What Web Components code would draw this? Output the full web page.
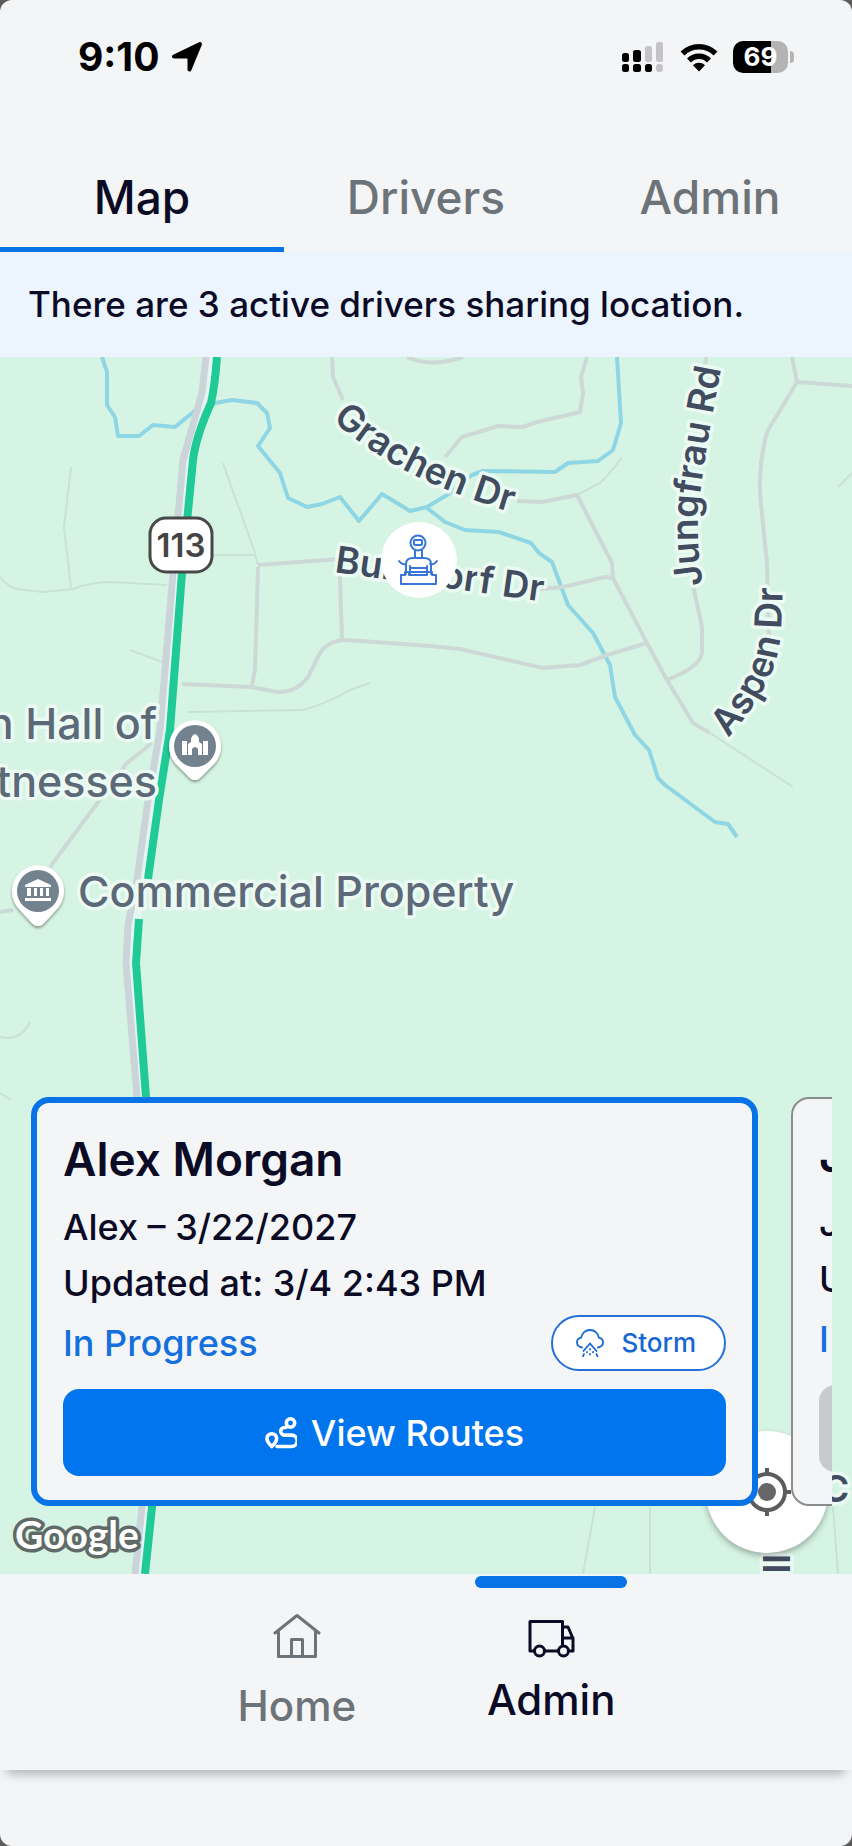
<!DOCTYPE html>
<html lang="en">
<head>
<meta charset="utf-8">
<meta name="viewport" content="width=device-width, initial-scale=1">
<title>Driver Map</title>
<style>
  html, body { margin: 0; }
  body {
    background: #5c5c5c;
    font-family: Inter, "Liberation Sans", sans-serif;
    font-weight: 500;
    --ink: #0b0b26;
    --muted: #6c7379;
    --blue: #0773e6;
    --surface: #f4f5f7;
    color: var(--ink);
  }
</style>
</head>
<body>
<driver-app></driver-app>

<template id="tpl-app">
  <style>
    :host {
      display: flex; flex-direction: column; min-height: 100vh;
      background: var(--surface); border-radius: 12px; overflow: hidden;
    }
    map-view { flex: 1 1 auto; }
    footer { height: 76px; }
  </style>
  <status-bar></status-bar>
  <tab-strip></tab-strip>
  <info-banner>There are 3 active drivers sharing location.</info-banner>
  <map-view>
    <driver-card selected button-label="View Routes">
      <span slot="name">Alex Morgan</span>
      <span slot="shift">Alex – 3/22/2027</span>
      <span slot="updated">Updated at: 3/4 2:43 PM</span>
      <span slot="status">In Progress</span>
      <storm-pill slot="tag">Storm</storm-pill>
    </driver-card>
    <driver-card button-label="">
      <span slot="name">J</span>
      <span slot="shift">J</span>
      <span slot="updated">U</span>
      <span slot="status">I</span>
    </driver-card>
  </map-view>
  <bottom-nav></bottom-nav>
  <footer></footer>
</template>

<template id="tpl-status">
  <style>
    :host { display: flex; align-items: center; justify-content: space-between; height: 114px; padding: 0 58px 0 78px; color: #000; }
    .left, .right { display: flex; align-items: center; }
    .left { gap: 12px; font-size: 39px; line-height: 48px; font-weight: 700; }
    .right { gap: 15px; }
    svg { display: block; }
    .battery { display: flex; align-items: center; gap: 2px; }
    .cell {
      width: 55px; height: 32px; border-radius: 10px; text-align: center;
      background: linear-gradient(90deg, #000 0 38px, #b4b4b4 38px);
      color: #fff; font-size: 26px; line-height: 32px; font-weight: 700;
    }
    .tip { width: 4px; height: 12px; border-radius: 0 4px 4px 0; background: #b4b4b4; }
  </style>
  <div class="left">
    <span>9:10</span>
    <svg width="32" height="32" viewBox="0 0 32 32" aria-hidden="true"><path d="M29 3 18.500 28.500V15.500H3Z" stroke="#000" stroke-width="4" stroke-linejoin="round"/></svg>
  </div>
  <div class="right">
    <svg width="44" height="32" viewBox="0 0 44 32" aria-hidden="true">
      <g fill="#000"><rect x="1" y="12" width="7" height="9" rx="2.500"/><rect x="12" y="9" width="8" height="12" rx="2.500"/>
      <rect x="1" y="23" width="7" height="8" rx="2.500"/><rect x="12" y="23" width="8" height="8" rx="2.500"/><rect x="24" y="23" width="7" height="8" rx="2.500"/></g>
      <g fill="#c4c4c6"><rect x="24" y="5" width="7" height="16" rx="2.500"/><rect x="35" y="1" width="7" height="20" rx="2.500"/><rect x="35" y="23" width="7" height="8" rx="3"/></g>
    </svg>
    <svg width="38" height="32" viewBox="0 0 38 32" aria-hidden="true">
      <g fill="none" stroke="#000" stroke-width="5.500"><path d="M2.500 12.500a23.500 23.500 0 0 1 33 0"/><path d="M9 19.500a14 14 0 0 1 20 0"/></g>
      <path d="M19 30.500l-6-6.200a8.500 8.500 0 0 1 12 0Z"/>
    </svg>
    <div class="battery"><div class="cell">69</div><div class="tip"></div></div>
  </div>
</template>

<template id="tpl-tabs">
  <style>
    :host { display: grid; grid-template-columns: repeat(3, 1fr); }
    button {
      font: inherit; font-size: 46px; line-height: 56px; color: var(--muted);
      background: none; border: 0; border-bottom: 5px solid transparent; margin: 0;
      padding: 55px 0 22px;
    }
    button[aria-selected="true"] { color: var(--ink); border-bottom-color: var(--blue); }
  </style>
  <button role="tab" aria-selected="true">Map</button>
  <button role="tab" aria-selected="false">Drivers</button>
  <button role="tab" aria-selected="false">Admin</button>
</template>

<template id="tpl-banner">
  <style>
    :host { display: block; background: #ecf4fe; padding: 30px 28px 31px; font-size: 35px; line-height: 44px; }
  </style>
  <slot></slot>
</template>

<template id="tpl-pill">
  <style>
    :host {
      display: flex; align-items: center; gap: 17px; box-sizing: border-box; height: 56px;
      padding: 0 28px 0 23px; border: 2px solid #2470d8; border-radius: 28px;
      background: #fff; color: #1767d2; font-size: 26px; line-height: 32px;
    }
  </style>
  <svg width="28" height="28" viewBox="0 0 28 28" fill="none" stroke="#1767d2" stroke-width="1.800" stroke-linecap="round" stroke-linejoin="round" aria-hidden="true">
    <path d="M6 18.500C3 18 1 16 1 13.300 1 10.800 2.800 9 5.200 8.600 5.800 4.200 9.500 1 14 1s8.200 3.200 8.800 7.600c2.400.4 4.200 2.200 4.200 4.700 0 2.700-2 4.700-5 5.200"/>
    <path d="M7.500 22l6.500-7.500 6.500 7.500M8 25l-1 2.500M20.500 25l1 2.500M14 20v.5M14 25v.5M11 23v.3M17 23v.3"/>
  </svg>
  <slot></slot>
</template>

<template id="tpl-card">
  <style>
    :host {
      display: flex; flex-direction: column; box-sizing: border-box;
      flex: 0 0 calc(100% - 74px); padding: 24px 26px;
      background: var(--surface); border: 2px solid #8a8c8e; border-radius: 18px;
      font-size: 36px; line-height: 56px; white-space: nowrap;
    }
    :host([selected]) { border: 6px solid var(--blue); }
    h2 { margin: 0 0 8px; font-size: 46px; line-height: 64px; font-weight: 600; }
    p { margin: 0; }
    .row { display: flex; align-items: center; justify-content: space-between; height: 56px; margin: 4px 0 18px; color: #1470dc; }
    button {
      display: flex; align-items: center; justify-content: center; gap: 14px;
      height: 87px; border: 0; border-radius: 16px; background: #c9cacc; color: #fff;
      font: inherit; line-height: 44px;
    }
    :host([selected]) button { background: #0075ee; }
  </style>
  <h2><slot name="name"></slot></h2>
  <p><slot name="shift"></slot></p>
  <p><slot name="updated"></slot></p>
  <div class="row"><slot name="status"></slot><slot name="tag"></slot></div>
  <button type="button"></button>
</template>

<template id="tpl-map">
  <style>
    :host { display: block; position: relative; overflow: hidden; min-height: 1217px; background: #d6f4e3; }
    .map { position: absolute; inset: 0; width: 100%; height: 100%; display: block; }
    .locate {
      position: absolute; right: 24px; bottom: 21px; width: 122px; height: 122px; padding: 0;
      display: grid; place-items: center;
      border: 0; border-radius: 50%; background: #fff; box-shadow: 0 3px 6px rgba(0, 0, 0, .3);
    }
    .cards {
      position: absolute; left: 20px; right: 20px; bottom: 68px; padding-left: 11px;
      display: flex; gap: 33px; overflow: hidden;
    }
    .minor { fill: none; stroke: #cdd9d6; stroke-width: 4; stroke-linejoin: round; }
    .faint { fill: none; stroke: #c8e2d7; stroke-width: 2; stroke-linejoin: round; }
    .river { fill: none; stroke: #8fd6e4; stroke-width: 4; stroke-linejoin: round; }
    .road { fill: none; stroke: #cbd4d8; stroke-width: 7; stroke-linejoin: round; }
    .casing { fill: none; stroke: #e4f6f2; stroke-width: 12; stroke-linejoin: round; }
    .route { fill: none; stroke: #1fca96; stroke-width: 8; stroke-linejoin: round; }
    text { paint-order: stroke; stroke: #ebfaf3; stroke-width: 7; stroke-linejoin: round; }
    .street { font-size: 37px; font-weight: 600; fill: #414c60; }
    .poi { font-size: 43px; fill: #5c6978; }
    .shield { font-size: 33px; font-weight: 600; fill: #444; stroke: none; }
    .brand { font-family: Lato, sans-serif; font-size: 39px; font-weight: 700; fill: #fff; stroke: #606a66; stroke-width: 7; }
  </style>
  <svg class="map" viewBox="0 357 852 1217" preserveAspectRatio="xMidYMid slice" role="img" aria-label="Map of driver locations">
    <defs>
      <path id="p-grachen" d="M332 420Q371 454 416 476T524 516"/>
      <path id="p-burgdorf" d="M334 572L560 604"/>
      <path id="p-jungfrau" d="M703 585Q694 530 701 487Q707 440 723 360"/>
      <path id="p-aspen" d="M728 738Q775 685 780 640Q783 610 783 550"/>
      <filter id="sh" x="-30%" y="-30%" width="160%" height="170%"><feDropShadow dx="0" dy="2" stdDeviation="1.500" flood-opacity=".4"/></filter>
    </defs>
    <g class="faint">
      <path d="M71 467L64 527L71 588M0 577Q8 587 17 589L43 592L73 589Q90 582 110 582L167 585M223 463L255 553M213 555H255L258 565M130 650L162 662"/>
      <path d="M188 712L303 710Q330 702 350 690L370 683M577 495L600 483Q612 472 622 457M710 733L793 787M838 487L852 473"/>
      <path d="M30 1022Q20 1042 0 1037M0 1093L11 1100M595 1507L583 1574M650 1507V1574M833 1507L838 1574"/>
    </g>
    <g class="river">
      <path d="M102 357L107 372V405L115 417L118 436H139L153 425L175 427L197 409L215 403L232 400L257 403L267 413L270 428L258 446L280 473L288 498L307 507L322 504L340 497L359 521L382 494L410 511L427 507L447 495L472 475L483 471L555 472L568 463L598 461L613 450L621 423L617 357"/>
      <path d="M427 508L445 522L465 530L499 532L531 543L539 553L552 562L568 605L593 633L610 665L615 697L635 735L649 750L658 778L665 785L715 822L728 824L737 837"/>
    </g>
    <g class="minor">
      <path d="M332 357L333 377L343 400M517 501L542 502L577 495L612 563L613 578L647 643L667 680L693 723L710 733"/>
      <path d="M587 357L581 377L583 393L580 412L537 422L523 427L498 426L462 437L445 457M407 357Q430 368 463 357"/>
      <path d="M540 589L563 587L605 577L613 578M258 565L340 559V577L342 639M258 567L255 670L252 685"/>
      <path d="M182 684L252 687L277 692Q296 693 308 677L320 653Q328 640 347 640L430 646L460 649L543 668L580 665L607 655L647 643"/>
      <path d="M706 357L704 375M693 585L702 627V653Q700 667 667 680M792 357L797 382L767 432Q757 470 761 505L767 563L769 640M797 382L852 386"/>
      <path d="M152 743L127 763L50 867M0 912L13 910"/>
    </g>
    <path class="casing" d="M214 357L210 393L189 460L180 573L166 730L155 800L144 880L133 925L132 963L142 1097L150 1300L148 1507L141 1574"/>
    <path class="road" d="M206 357L202 393L183 460L173 573L160 730L148 800L137 880L128 925L126 963L137 1097L143 1300L142 1507L135 1574"/>
    <path class="route" d="M217 357Q215 385 211 403Q196 436 193 460L182 573L170 730L159 800L148 879M139 919L136 963L146 1097L154 1300L152 1507L145 1574"/>

    <text class="street"><textPath href="#p-grachen">Grachen Dr</textPath></text>
    <text class="street"><textPath href="#p-burgdorf">Burgdorf Dr</textPath></text>
    <text class="street"><textPath href="#p-jungfrau">Jungfrau Rd</textPath></text>
    <text class="street"><textPath href="#p-aspen">Aspen Dr</textPath></text>
    <text class="street" x="822" y="1502">C</text>
    <text class="street" transform="translate(790 1554) rotate(-90)" text-anchor="end">ll</text>

    <text class="poi" x="157" y="739" text-anchor="end">n Hall of</text>
    <text class="poi" x="157" y="797" text-anchor="end">tnesses</text>
    <text class="poi" x="78" y="907">Commercial Property</text>

    <g transform="translate(195 746)">
      <path filter="url(#sh)" fill="#fff" d="M0 34Q-4 34-8 29L-19 18A26 26 0 1 1 19 18L8 29Q4 34 0 34Z"/>
      <circle r="21" fill="#73828f"/>
      <path fill="#fff" d="M-13-5h5V9h-5ZM8-5h5V9H8ZM-7 9V-2l3-2v-3q1-4 4-5q3 1 4 5v3l3 2V9H3V3Q0-1-3 3v6Z"/>
    </g>
    <g transform="translate(38 891)">
      <path filter="url(#sh)" fill="#fff" d="M0 35Q-4 35-8 30L-19 18A26 26 0 1 1 19 18L8 30Q4 35 0 35Z"/>
      <circle r="21" fill="#73828f"/>
      <path fill="#fff" d="M0-12L13-6v2H-13v-2ZM-11-3h4V5h-4ZM-4-3h3V5h-3ZM2-3h3V5H2ZM8-3h3V5H8ZM-13 7h26v3h-26Z"/>
    </g>

    <rect x="150" y="518" width="62" height="54" rx="16" fill="#fff" stroke="#484848" stroke-width="3"/>
    <text class="shield" x="181" y="557" text-anchor="middle">113</text>

    <circle cx="419" cy="560" r="38" fill="#fff"/>
    <g fill="none" stroke="#3a76d8" stroke-width="2" stroke-linejoin="round" stroke-linecap="round">
      <circle cx="418" cy="543" r="7.500"/><rect x="414" y="540" width="8" height="5" rx="1"/>
      <path d="M415 550v8M422 550v8M406 574v-10q0-6 7-6h11q7 0 7 6v10M399 561q3 4 7 3M437 561q-3 4-7 3M410 566v8M427 566v8M410 568h17M410 572h17"/>
      <path d="M401 584v-9h4v-3h4v3h18v-3h5v3h4v9Z"/>
    </g>
    <text class="brand" x="15" y="1549">Google</text>
  </svg>
  <button class="locate" type="button" aria-label="Centre on my location">
    <svg width="52" height="52" viewBox="0 0 52 52" aria-hidden="true"><circle cx="26" cy="26" r="9" fill="#666"/><g fill="none" stroke="#5c5c5c" stroke-width="4"><circle cx="26" cy="26" r="18"/><path d="M26 2v6M26 44v6M2 26h6M44 26h6"/></g></svg>
  </button>
  <div class="cards"><slot></slot></div>
</template>

<template id="tpl-nav">
  <style>
    :host {
      display: flex; justify-content: center; height: 196px; position: relative; z-index: 1;
      box-sizing: border-box; padding-right: 4px;
      background: var(--surface); box-shadow: 0 11px 10px -7px rgba(0, 0, 0, .28);
    }
    a {
      width: 30%; position: relative; display: flex; flex-direction: column; align-items: center;
      gap: 20px; padding-top: 38px; box-sizing: border-box;
      font-size: 42px; line-height: 52px; color: var(--muted); text-decoration: none;
    }
    a[aria-current] { gap: 14px; color: var(--ink); }
    a[aria-current]::before {
      content: ""; position: absolute; top: 2px; width: 152px; height: 12px; border-radius: 6px; background: var(--blue);
    }
    svg { display: block; fill: none; stroke: currentColor; stroke-width: 3; stroke-linejoin: round; stroke-linecap: round; }
  </style>
  <a href="#home">
    <svg width="48" height="48" viewBox="0 0 48 48" aria-hidden="true"><path d="M2 21L24 3.500 46 21M5.500 19V44.500H42.500V19M18.500 44V27.500H29.500V44"/></svg>
    <span>Home</span>
  </a>
  <a href="#admin" aria-current="page">
    <svg width="48" height="48" viewBox="0 0 48 48" aria-hidden="true"><path d="M7 39H3V9.500H35.500V39H18M35.500 15H41L46 26.500V39H43.500M36 26H46M29.500 39H18"/><circle cx="12.500" cy="39" r="5" fill="#f4f5f7"/><circle cx="36.500" cy="39" r="5" fill="#f4f5f7"/></svg>
    <span>Admin</span>
  </a>
</template>

<script>
  class TemplateElement extends HTMLElement {
    constructor() {
      super();
      const tpl = document.getElementById(this.constructor.template);
      this.attachShadow({ mode: "open" }).append(tpl.content.cloneNode(true));
    }
  }
  const ROUTE_ICON = `<svg width="32" height="32" viewBox="0 0 32 32" fill="none" stroke="#fff" stroke-width="3.600" stroke-linecap="round" stroke-linejoin="round" aria-hidden="true">
    <circle cx="25.500" cy="6" r="4.200"/><path d="M21 10.500H19.500a3.800 3.800 0 0 0 0 7.600h7a5.700 5.700 0 0 1 0 11.400H12"/>
    <path d="M6.800 29.500Q2 25 2 21.500a4.800 4.800 0 0 1 9.600 0Q11.600 25 6.800 29.500Z"/></svg>`;

  customElements.define("status-bar", class extends TemplateElement { static template = "tpl-status"; });
  customElements.define("tab-strip", class extends TemplateElement {
    static template = "tpl-tabs";
    connectedCallback() { this.setAttribute("role", "tablist"); }
  });
  customElements.define("info-banner", class extends TemplateElement { static template = "tpl-banner"; });
  customElements.define("storm-pill", class extends TemplateElement { static template = "tpl-pill"; });
  customElements.define("driver-card", class extends TemplateElement {
    static template = "tpl-card";
    connectedCallback() {
      const button = this.shadowRoot.querySelector("button");
      const label = this.getAttribute("button-label");
      if (label) {
        button.innerHTML = ROUTE_ICON;
        button.append(label);
      } else {
        button.disabled = true;
        button.setAttribute("aria-label", "Routes unavailable");
      }
    }
  });
  customElements.define("map-view", class extends TemplateElement { static template = "tpl-map"; });
  customElements.define("bottom-nav", class extends TemplateElement {
    static template = "tpl-nav";
    connectedCallback() { this.setAttribute("role", "navigation"); }
  });
  customElements.define("driver-app", class extends TemplateElement { static template = "tpl-app"; });
</script>
</body>
</html>
